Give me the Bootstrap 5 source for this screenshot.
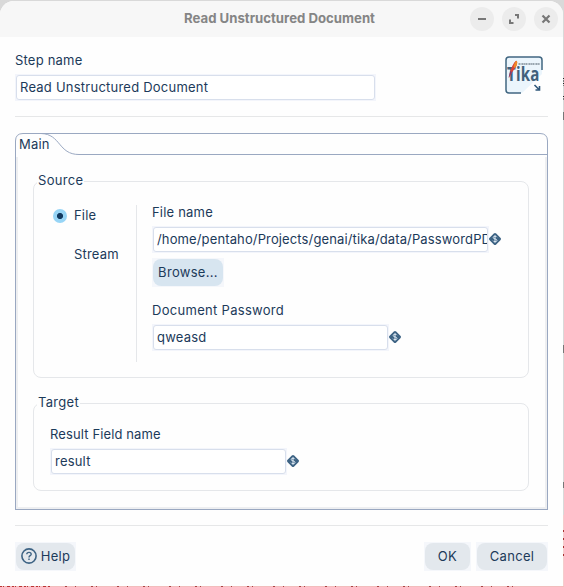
<!DOCTYPE html>
<html lang="en">
<head>
<meta charset="utf-8">
<meta name="viewport" content="width=device-width, initial-scale=1">
<title>Read Unstructured Document</title>
<link rel="stylesheet" href="https://cdn.jsdelivr.net/npm/bootstrap@5.3.0/dist/css/bootstrap.min.css">
<style>
body{margin:0;width:564px;height:587px;overflow:hidden;background:#d9d9d9;font:13px/18px Inter,sans-serif;letter-spacing:.2px;color:#1c3a5a}
.backdrop{left:0;top:0}
.dialog{width:563px;height:585px;margin-top:1px;background:#fefefe;border-radius:14px 14px 0 0;overflow:hidden}
.titlebar{height:36px;background:#f7f7f7;color:#858585;font-weight:700}
.title-text{left:0;right:4px;top:8px;line-height:18px;font-size:13.2px;letter-spacing:0}
.winbtns{gap:8px;padding:6px 5px 0 0}
.winbtn{width:24px;height:24px;border-radius:50%;background:#ececec}
.winbtn svg{display:block}
.content-area{padding:14px 15px 0}
.headrow{height:65px}
.field{height:27px;border:1px solid #f3f5fb;background:#f3f5fb;margin-top:5px}
.field input{display:block;width:100%;height:25px;border:1px solid #d8dfec;border-radius:3px;padding:0 0 1px 3px;background:#fff;color:inherit;font:inherit;letter-spacing:inherit;outline:0}
.rule{height:1px;background:#e6e7e8}
.panel{margin-top:16px;height:377px}
.tabhead{height:22px}
.tabhead svg{left:0;top:0}
.tabhead span{padding:2px 0 0 4px}
.tabbody{height:355px;border:1px solid #9aa8c1;border-top:0;padding:2px 0 0}
.tabinner{height:352px;border:2px solid #eeeff1;border-top:0;padding:24px 15px 0}
.group{border:1px solid #e5e7ea;border-radius:8px;width:496px}
.legend-text{left:3px;top:-11px;padding:0 1px;background:#fefefe;letter-spacing:.3px}
.source{height:197px}
.target{height:88px;margin-top:25px;padding:21px 16px 0}
.radios{width:103px;height:157px;margin-top:23px;border-right:1px solid #e5e7ea;padding:1px 0 0 19px}
.radios label{height:39px}
.radio-dot{width:14px;height:14px;border-radius:50%;background:radial-gradient(circle,#123a60 0 2.7px,#97d5f6 3.4px);margin:3px 7px 0 0}
.fields{padding:21px 0 0 15px}
.var{width:12px;height:12px;margin:12px 0 0;display:block}
.wbtn{height:29px;border:1px solid #f5f7fb;background:#f5f7fb;padding:0;letter-spacing:.3px}
.wbtn button{display:flex;align-items:center;justify-content:center;width:100%;height:27px;padding:0 0 1px;border:0;border-radius:8px;background:#e3e8ed;color:inherit;font:inherit;letter-spacing:inherit}
.wbtn .browse{background:#d7e5f0}
.w-name{width:361px;letter-spacing:.23px}.w-file{width:337px;letter-spacing:.13px}.w-pass{width:237px}
.w-browse{width:72px;margin-top:5px}.w-help{width:61px}.w-ok{width:47px}.w-cancel{width:72px;margin-left:5px}
.pass-label{margin-top:14px;letter-spacing:.3px}
.result-label{letter-spacing:.12px}
.logo{width:40px;height:40px;margin:5px 3px 0 0}
.lower-rule{margin-top:15px}
.actions{margin-top:16px}
</style>
<script src="https://cdn.jsdelivr.net/npm/bootstrap@5.3.0/dist/js/bootstrap.bundle.min.js"></script>
</head>
<body>
<svg width="0" height="0" class="position-absolute"><defs><symbol id="var" viewBox="0 0 12 12"><path d="M4.8.6Q6-.6 7.2.6L11.4 4.8Q12.6 6 11.4 7.2L7.2 11.4Q6 12.6 4.8 11.4L.6 7.2Q-.6 6 .6 4.8Z" fill="#3d6384"/><path d="M7.9 4.2Q7.4 3.2 6 3.2 4.2 3.2 4.2 4.6 4.2 5.6 6 5.9 8 6.2 8 7.4 8 8.7 6 8.7 4.5 8.7 4 7.7M6 2.2V9.8" fill="none" stroke="#dce8f2" stroke-width="1"/></symbol></defs></svg>
<svg class="backdrop position-absolute" width="564" height="587">
  <path d="M563.5 78V86M563.5 96V101" stroke="#222" stroke-dasharray="1 1.5"/>
  <path d="M563.5 112V120M563.5 345V353M563.5 482V488" stroke="#777"/>
  <path d="M563.5 515V587" stroke="#f5cccc"/><path d="M563.5 530V556" stroke="#a33" stroke-dasharray="2 6"/>
  <path d="M0 586.5H564" stroke="#f3bcbc"/>
  <path d="M0 586.5H50" stroke="#b33" stroke-dasharray="2 1 1 3 3 2"/>
  <path d="M65 586.5H530" stroke="#a44" stroke-dasharray="2 8 1 15 2 3 1 20"/>
</svg>
<main class="dialog position-relative">
  <header class="titlebar position-relative">
    <div class="title-text position-absolute text-center">Read Unstructured Document</div>
    <div class="winbtns d-flex justify-content-end">
      <div class="winbtn"><svg width="24" height="24"><path d="M8 12H16" stroke="#777" stroke-width="2"/></svg></div>
      <div class="winbtn"><svg width="24" height="24"><path d="M13 8H16V11.5M8 12.5V16H11.5" fill="none" stroke="#777" stroke-width="2"/></svg></div>
      <div class="winbtn"><svg width="24" height="24"><path d="M8.5 8.5L15.5 15.5M15.5 8.5L8.5 15.5" stroke="#777" stroke-width="2.2"/></svg></div>
    </div>
  </header>
  <div class="content-area">
    <div class="headrow d-flex justify-content-between">
      <div><div>Step name</div><div class="field w-name"><input value="Read Unstructured Document" aria-label="Step name"></div></div>
      <svg class="logo" viewBox="0 0 40 40">
        <path d="M4 1H34Q37 1 37 4V18L17 37H4Q1 37 1 34V4Q1 1 4 1Z" fill="#ebf5fc"/>
        <path d="M16 37H4Q1 37 1 34V4Q1 1 4 1H34Q37 1 37 4V14" fill="none" stroke="#416681" stroke-width="1.5"/>
        <text x="2" y="25" font-family="Open Sans" font-weight="700" font-size="19" textLength="32.5" lengthAdjust="spacingAndGlyphs" fill="#41617c">Tika</text>
        <path d="M4 22Q5 13 9 7 11 4 12 5 13 9 8 15Z" fill="#d9443a"/><path d="M8.5 11Q10 4 12 5 13 8 10 12Z" fill="#f08a27"/><path d="M3.5 22L5 15 7 16Z" fill="#7b3d74"/>
        <path d="M13.5 8H35" stroke="#7c8a95" stroke-width="1.6" stroke-dasharray="1.6 .5 1 .4"/>
        <path d="M29.5 29L34 33.5M34.5 30V34H30.5" fill="none" stroke="#31587b" stroke-width="1.6"/>
      </svg>
    </div>
    <div class="rule"></div>
    <section class="panel">
      <div class="tabhead position-relative">
        <svg class="position-absolute" width="533" height="22"><path d="M.5 22V8Q.5 .5 8 .5H525Q532.5 .5 532.5 8V22M26 .5C46 1 43 21.5 64 21.5H532" fill="none" stroke="#9aa8c1"/></svg>
        <span class="position-relative d-block">Main</span>
      </div>
      <div class="tabbody"><div class="tabinner">
        <section class="group source position-relative d-flex">
          <span class="legend-text position-absolute">Source</span>
          <div class="radios">
            <label class="d-flex"><span class="radio-dot"></span>File</label>
            <label class="d-flex"><span class="radio-dot invisible"></span>Stream</label>
          </div>
          <div class="fields">
            <div>File name</div>
            <div class="d-flex"><div class="field w-file"><input value="/home/pentaho/Projects/genai/tika/data/PasswordPDF.pdf" aria-label="File name"></div><svg class="var"><use href="#var"/></svg></div>
            <div class="wbtn w-browse"><button class="browse">Browse...</button></div>
            <div class="pass-label">Document Password</div>
            <div class="d-flex"><div class="field w-pass"><input value="qweasd" aria-label="Document Password"></div><svg class="var"><use href="#var"/></svg></div>
          </div>
        </section>
        <section class="group target position-relative">
          <span class="legend-text position-absolute">Target</span>
          <div class="result-label">Result Field name</div>
          <div class="d-flex"><div class="field w-pass"><input value="result" aria-label="Result Field name"></div><svg class="var"><use href="#var"/></svg></div>
        </section>
      </div></div>
    </section>
    <div class="rule lower-rule"></div>
    <footer class="actions d-flex">
      <div class="wbtn w-help"><button><svg width="16" height="16" class="me-1"><circle cx="8" cy="8" r="7.1" fill="none" stroke="#3d6384" stroke-width="1.6"/><path d="M5.8 6.3Q5.8 4.4 8 4.4T10.2 6.2C10.2 7.7 8 7.6 8 9.4M8 10.5V12" fill="none" stroke="#3d6384" stroke-width="1.4"/></svg>Help</button></div>
      <div class="wbtn w-ok ms-auto"><button>OK</button></div>
      <div class="wbtn w-cancel"><button>Cancel</button></div>
    </footer>
  </div>
</main>
</body>
</html>
